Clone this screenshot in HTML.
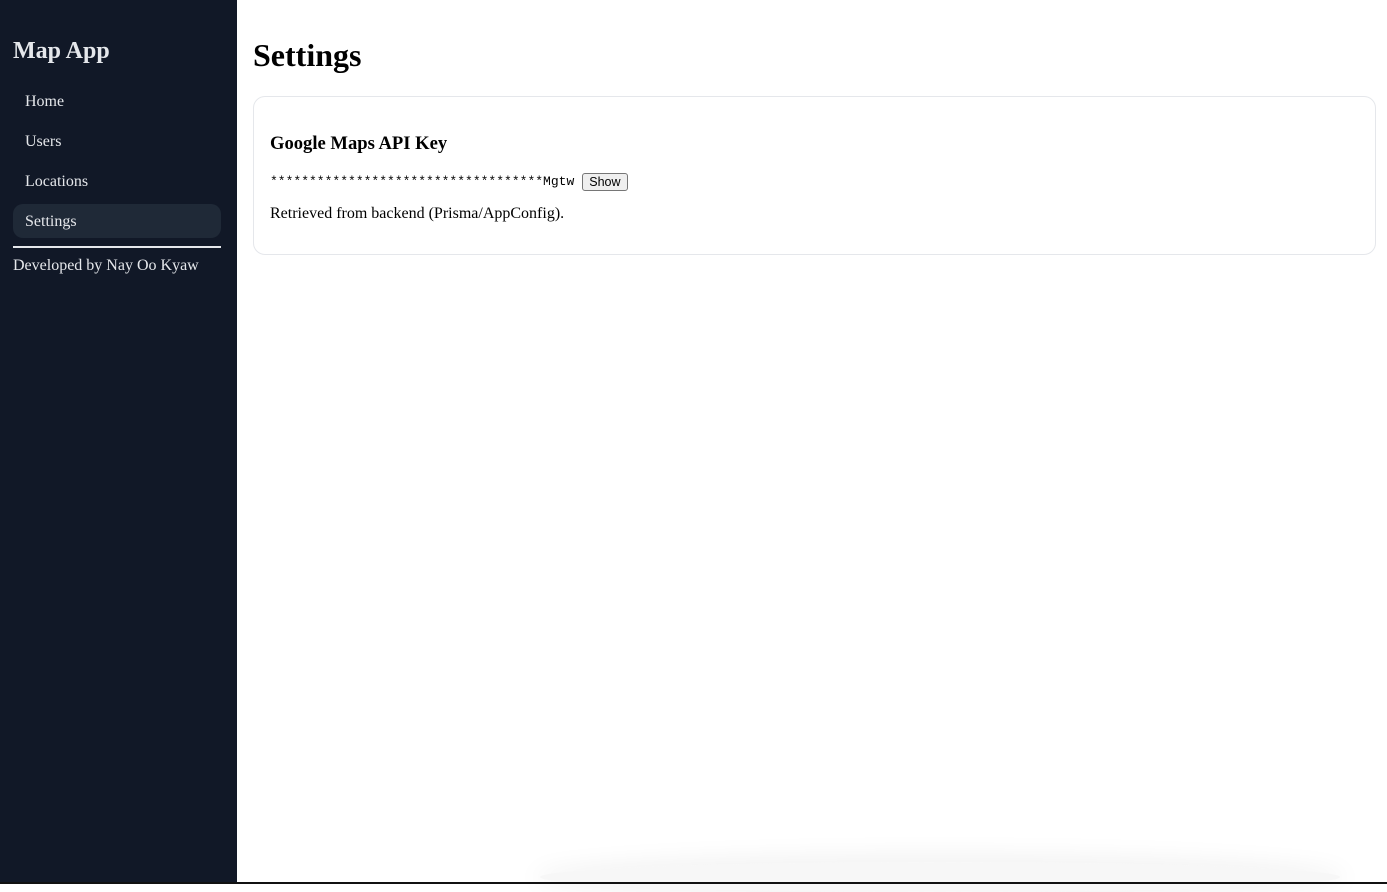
<!DOCTYPE html>
<html><head><meta charset="utf-8"><style>
html,body{margin:0;padding:0;width:1387px;height:884px;overflow:hidden;background:#fff;font-family:"Liberation Serif",serif;}
.side{position:absolute;left:0;top:0;width:237px;height:882px;background:#111827;color:#e5e7eb;}
.side h2{position:absolute;left:13px;top:37px;margin:0;font-size:24px;font-weight:bold;line-height:28px;}
.nav{position:absolute;left:13px;width:208px;height:34px;line-height:36px;font-size:16px;padding-left:12px;box-sizing:border-box;border-radius:10px;}
.act{background:#1f2937;}
.hr{position:absolute;left:13px;top:246px;width:208px;height:2px;background:#e5e7eb;}
.dev{position:absolute;left:13px;top:256px;font-size:16px;line-height:20px;}
h1{position:absolute;left:253px;top:36px;margin:0;font-size:32px;line-height:38px;}
.card{position:absolute;left:253px;top:96px;width:1123px;height:159px;box-sizing:border-box;border:1px solid #e5e7eb;border-radius:12px;}
h3{position:absolute;left:16px;top:36px;margin:0;font-size:18.6px;line-height:22px;}
.key{position:absolute;left:16px;top:75px;font-family:"Liberation Mono",monospace;font-size:13px;line-height:20px;}
.btn{display:inline-block;font-family:"Liberation Sans",sans-serif;font-size:12.5px;border:1px solid #767676;border-radius:3px;background:#efefef;padding:0 6px;line-height:16px;margin-left:8px;vertical-align:middle;}
.ret{position:absolute;left:16px;top:107px;font-size:16px;line-height:20px;}
.bot{position:absolute;left:0;top:882px;width:1387px;height:2px;background:#111;}
.sh{position:absolute;left:540px;top:862px;width:800px;height:30px;border-radius:50%;box-shadow:0 0 24px 8px rgba(0,0,0,0.05);background:rgba(0,0,0,0.03);}
</style></head><body>
<div class="sh"></div>
<div class="side">
<h2>Map App</h2>
<div class="nav" style="top:84px">Home</div>
<div class="nav" style="top:124px">Users</div>
<div class="nav" style="top:164px">Locations</div>
<div class="nav act" style="top:204px">Settings</div>
<div class="hr"></div>
<div class="dev">Developed by Nay Oo Kyaw</div>
</div>
<h1>Settings</h1>
<div class="card">
<h3>Google Maps API Key</h3>
<div class="key">***********************************Mgtw<span class="btn">Show</span></div>
<div class="ret">Retrieved from backend (Prisma/AppConfig).</div>
</div>
<div class="bot"></div>
</body></html>
